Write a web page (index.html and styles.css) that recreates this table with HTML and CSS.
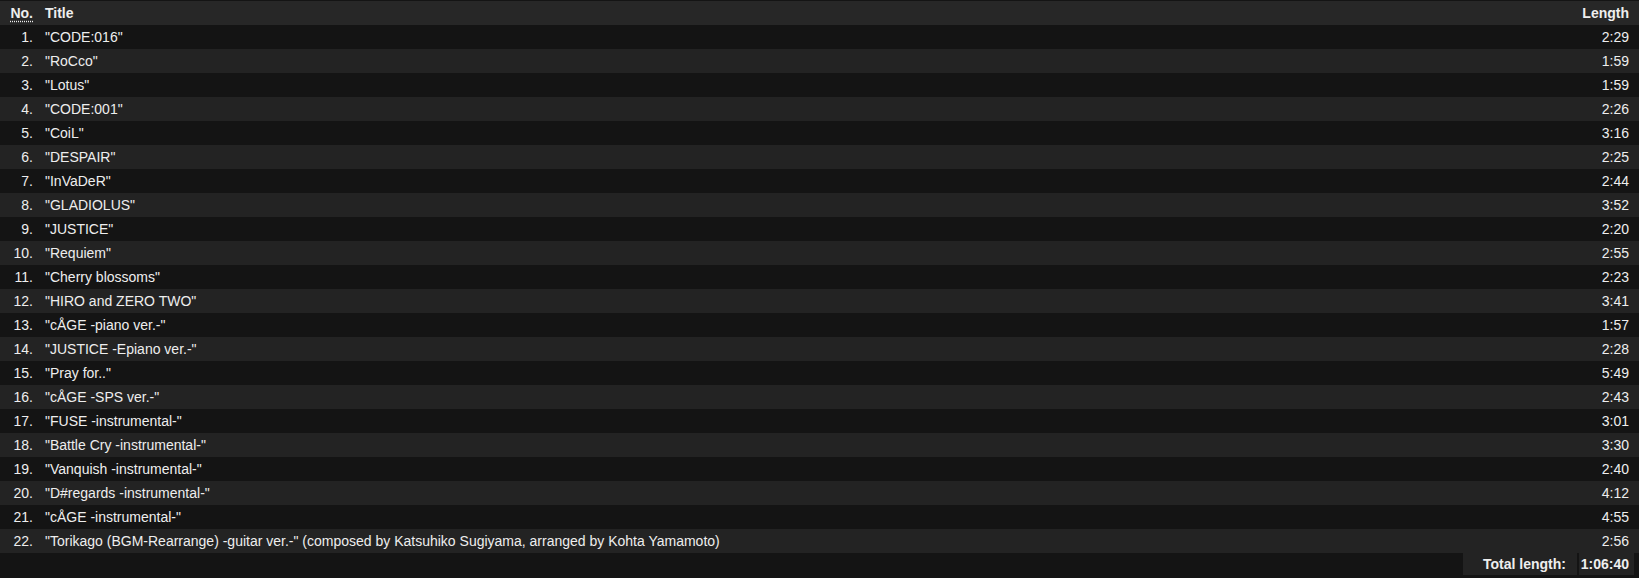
FILE: index.html
```html
<!DOCTYPE html>
<html>
<head>
<meta charset="utf-8">
<link rel="stylesheet" href="styles.css">
</head>
<body>
<table class="tracklist">
  <thead>
    <tr class="head-row">
      <th class="col-no"><abbr title="Number">No.</abbr></th>
      <th class="col-title">Title</th>
      <th class="col-len">Length</th>
    </tr>
  </thead>
  <tbody>
    <tr><td class="col-no">1.</td><td class="col-title">"CODE:016"</td><td class="col-len">2:29</td></tr>
    <tr><td class="col-no">2.</td><td class="col-title">"RoCco"</td><td class="col-len">1:59</td></tr>
    <tr><td class="col-no">3.</td><td class="col-title">"Lotus"</td><td class="col-len">1:59</td></tr>
    <tr><td class="col-no">4.</td><td class="col-title">"CODE:001"</td><td class="col-len">2:26</td></tr>
    <tr><td class="col-no">5.</td><td class="col-title">"CoiL"</td><td class="col-len">3:16</td></tr>
    <tr><td class="col-no">6.</td><td class="col-title">"DESPAIR"</td><td class="col-len">2:25</td></tr>
    <tr><td class="col-no">7.</td><td class="col-title">"InVaDeR"</td><td class="col-len">2:44</td></tr>
    <tr><td class="col-no">8.</td><td class="col-title">"GLADIOLUS"</td><td class="col-len">3:52</td></tr>
    <tr><td class="col-no">9.</td><td class="col-title">"JUSTICE"</td><td class="col-len">2:20</td></tr>
    <tr><td class="col-no">10.</td><td class="col-title">"Requiem"</td><td class="col-len">2:55</td></tr>
    <tr><td class="col-no">11.</td><td class="col-title">"Cherry blossoms"</td><td class="col-len">2:23</td></tr>
    <tr><td class="col-no">12.</td><td class="col-title">"HIRO and ZERO TWO"</td><td class="col-len">3:41</td></tr>
    <tr><td class="col-no">13.</td><td class="col-title">"cÅGE -piano ver.-"</td><td class="col-len">1:57</td></tr>
    <tr><td class="col-no">14.</td><td class="col-title">"JUSTICE -Epiano ver.-"</td><td class="col-len">2:28</td></tr>
    <tr><td class="col-no">15.</td><td class="col-title">"Pray for.."</td><td class="col-len">5:49</td></tr>
    <tr><td class="col-no">16.</td><td class="col-title">"cÅGE -SPS ver.-"</td><td class="col-len">2:43</td></tr>
    <tr><td class="col-no">17.</td><td class="col-title">"FUSE -instrumental-"</td><td class="col-len">3:01</td></tr>
    <tr><td class="col-no">18.</td><td class="col-title">"Battle Cry -instrumental-"</td><td class="col-len">3:30</td></tr>
    <tr><td class="col-no">19.</td><td class="col-title">"Vanquish -instrumental-"</td><td class="col-len">2:40</td></tr>
    <tr><td class="col-no">20.</td><td class="col-title">"D#regards -instrumental-"</td><td class="col-len">4:12</td></tr>
    <tr><td class="col-no">21.</td><td class="col-title">"cÅGE -instrumental-"</td><td class="col-len">4:55</td></tr>
    <tr><td class="col-no">22.</td><td class="col-title">"Torikago (BGM-Rearrange) -guitar ver.-" (composed by Katsuhiko Sugiyama, arranged by Kohta Yamamoto)</td><td class="col-len">2:56</td></tr>
  </tbody>
</table>
<div class="total">
  <div class="total-label">Total length:</div>
  <div class="total-value">1:06:40</div>
</div>
</body>
</html>
```

FILE: styles.css
```css
html, body {
  margin: 0;
  padding: 0;
  background: #141414;
}
body {
  padding-top: 1px;
  font-family: "Liberation Sans", Arial, sans-serif;
  font-size: 14px;
  color: #eeeeee;
}
.tracklist {
  width: 100%;
  border-collapse: collapse;
  border-spacing: 0;
}
.tracklist th,
.tracklist td {
  height: 24px;
  padding: 0 5px;
  vertical-align: middle;
  line-height: 16px;
  white-space: nowrap;
}
.head-row {
  background: #272727;
}
.tracklist th {
  font-weight: bold;
}
.tracklist abbr {
  text-decoration: underline dotted;
  text-underline-offset: 3px;
}
.tracklist tbody tr:nth-child(odd) {
  background: #141414;
}
.tracklist tbody tr:nth-child(even) {
  background: #232323;
}
.tracklist .col-no {
  width: 28px;
  min-width: 28px;
  text-align: right;
}
.tracklist .col-title {
  text-align: left;
  padding-left: 7px;
}
.tracklist .col-len {
  width: 1%;
  text-align: right;
  padding-right: 10px;
}
.total {
  display: flex;
  justify-content: flex-end;
  gap: 2px;
  padding-right: 5px;
}
.total-label,
.total-value {
  height: 22px;
  line-height: 22px;
  background: #232323;
  font-weight: bold;
  text-align: right;
  box-sizing: border-box;
}
.total-label {
  width: 114px;
  padding-right: 11px;
}
.total-value {
  width: 55px;
  padding-right: 5px;
}
```
